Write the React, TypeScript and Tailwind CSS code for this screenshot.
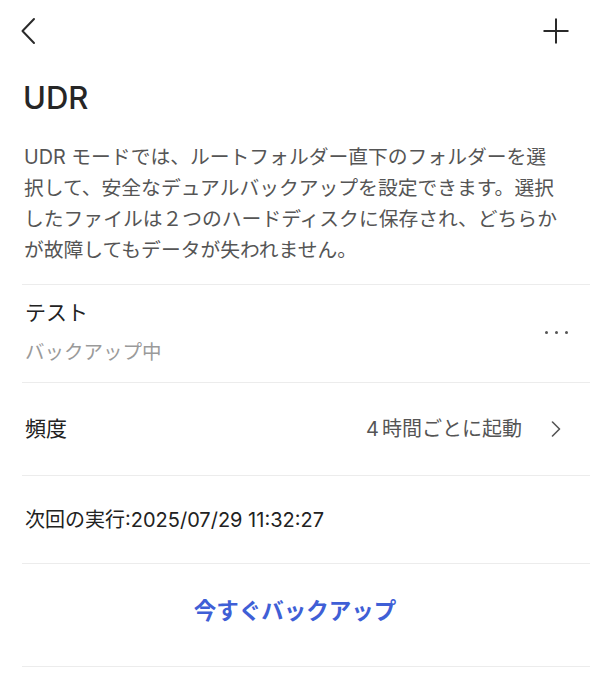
import React from "react";

const FONT = { fontFamily: 'Inter, "Noto Sans CJK JP", "Noto Sans", sans-serif' };

export default function App() {
  return (
    <div className="w-[590px] min-h-[676px] bg-white text-[#222]" style={FONT}>
      {/* Header */}
      <div className="h-[62px] flex items-center justify-between pl-[20px] pr-[21px]">
        <svg width="16" height="28" viewBox="0 0 16 28" fill="none">
          <path d="M14 2 L2.5 14 L14 26" stroke="#2a2a2a" strokeWidth="2" strokeLinecap="round" strokeLinejoin="round" />
        </svg>
        <svg width="26" height="26" viewBox="0 0 26 26" fill="none">
          <path d="M13 0.5 V25.5 M0.5 13 H25.5" stroke="#2a2a2a" strokeWidth="2" />
        </svg>
      </div>

      {/* Title */}
      <div className="pl-[23px] mt-[18px] text-[31px] leading-[36px] font-medium text-[#262626]">UDR</div>

      {/* Description */}
      <div className="pl-[24px] pr-[16px] mt-[26px] pb-[18px] text-[19.8px] leading-[31px] text-[#555]">
        UDR モードでは、ルートフォルダー直下のフォルダーを選
        <br />
        択して、安全なデュアルバックアップを設定できます。選択
        <br />
        したファイルは２つのハードディスクに保存され、どちらか
        <br />
        が故障してもデータが失われません。
      </div>

      {/* Row: テスト */}
      <div className="ml-[22px] border-t border-[#ececec] flex items-center justify-between pr-[22px] pt-[14px] pb-[16px]">
        <div className="flex flex-col gap-[11px] pl-[3px]">
          <div className="text-[21px] leading-[28px] text-[#222]">テスト</div>
          <div className="text-[19.5px] leading-[28px] text-[#9a9a9a]">バックアップ中</div>
        </div>
        <div className="flex items-center gap-[7px]">
          <span className="w-[3px] h-[3px] rounded-full bg-[#555]" />
          <span className="w-[3px] h-[3px] rounded-full bg-[#555]" />
          <span className="w-[3px] h-[3px] rounded-full bg-[#555]" />
        </div>
      </div>

      {/* Row: 頻度 */}
      <div className="ml-[22px] border-t border-[#ececec] h-[93px] flex items-center justify-between pr-[29px]">
        <div className="pl-[3px] text-[21px] leading-[28px] text-[#222]">頻度</div>
        <div className="flex items-center gap-[29px]">
          <span className="text-[20px] leading-[28px] text-[#555]">
            <span className="mr-[3px]">4</span>時間ごとに起動
          </span>
          <svg width="10" height="16" viewBox="0 0 10 16" fill="none">
            <path d="M1.5 1 L8.5 8 L1.5 15" stroke="#555" strokeWidth="1.6" strokeLinecap="round" strokeLinejoin="round" />
          </svg>
        </div>
      </div>

      {/* Row: next run */}
      <div className="ml-[22px] border-t border-[#ececec] h-[88px] flex items-center">
        <div className="pl-[3px] text-[20px] leading-[28px] text-[#222]">次回の実行:2025/07/29 11:32:27</div>
      </div>

      {/* Row: backup now */}
      <div className="ml-[22px] border-t border-b border-[#ececec] h-[104px] flex items-center justify-center pb-[8px] pr-[22px]">
        <span className="text-[22.5px] leading-[30px] font-semibold text-[#3f5fd6]">今すぐバックアップ</span>
      </div>
    </div>
  );
}
